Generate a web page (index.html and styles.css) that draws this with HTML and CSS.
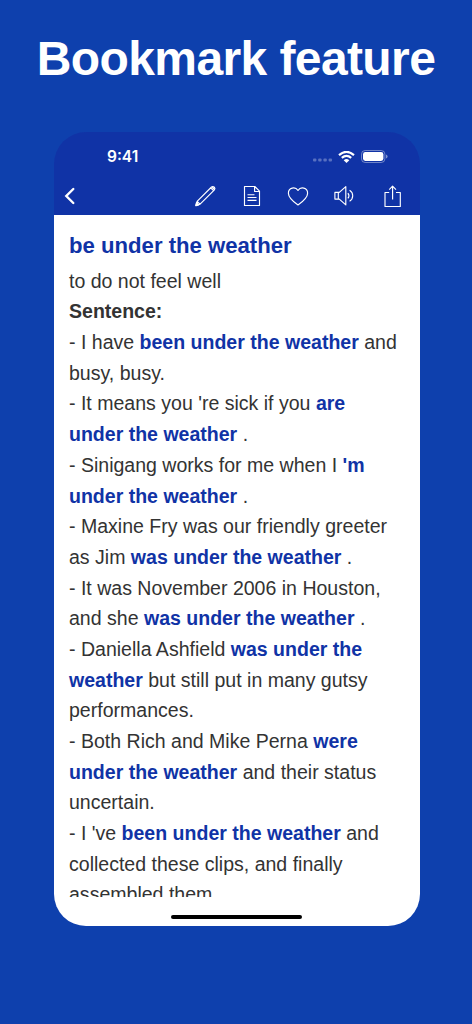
FILE: index.html
```html
<!DOCTYPE html>
<html lang="en">
<head>
    <meta charset="UTF-8">
    <meta name="viewport" content="width=device-width, initial-scale=1.0">
    <title>Bookmark feature</title>
    <link rel="stylesheet" href="styles.css">
</head>
<body>
    <h1 class="title">Bookmark feature</h1>
    <div class="phone">
        <header>
            <div class="status-bar">
                <span class="time">9:41</span>
                <div class="status-icons">
                    <svg class="dots" width="20" height="4" viewBox="0 0 20 4">
                        <rect x="0" y="0.5" width="3.4" height="3" rx="1"/>
                        <rect x="5.2" y="0.5" width="3.4" height="3" rx="1"/>
                        <rect x="10.4" y="0.5" width="3.4" height="3" rx="1"/>
                        <rect x="15.6" y="0.5" width="3.4" height="3" rx="1"/>
                    </svg>
                    <svg class="wifi" width="17" height="12" viewBox="0 0 17 12">
                        <path d="M1 4.1 Q8.5 -2.3 16 4.1 M3.8 6.9 Q8.5 2.9 13.2 6.9" fill="none" stroke="#fff" stroke-width="2.2"/>
                        <path d="M5.7 9.2 Q8.5 6.9 11.3 9.2 L8.5 12 Z" fill="#fff"/>
                    </svg>
                    <svg class="battery" width="27" height="13" viewBox="0 0 27 13">
                        <rect x="0.5" y="0.5" width="23.4" height="12" rx="3.7" fill="none" stroke="#fff" stroke-opacity="0.4"/>
                        <rect x="2" y="2" width="20.4" height="9" rx="2.4" fill="#fff"/>
                        <path d="M25 4.5 Q26.6 5 26.6 6.5 Q26.6 8 25 8.5 Z" fill="#fff" fill-opacity="0.45"/>
                    </svg>
                </div>
            </div>
            <div class="toolbar">
                <svg class="back" width="12" height="18" viewBox="0 0 12 18">
                    <path d="M9.3 2 L2.3 9 L9.3 16" stroke-width="2.4" stroke-linecap="round"/>
                </svg>
                <div class="actions">
                    <!-- edit -->
                    <svg width="24" height="24" viewBox="0 0 24 24">
                        <path d="M3 21.5 L4.1 17.3 L18.5 3 Q19.9 1.9 21.3 3.1 Q22.5 4.5 21.4 5.9 L7.1 20.2 Z M4.1 17.3 L7.1 20.2 M17.7 3.9 L20.5 6.7"/>
                        <path d="M3 21.5 L3.7 18.8 L5.6 20.7 Z M19.2 3.1 L21.3 5.2" stroke-width="1.6" fill="#fff"/>
                    </svg>
                    <!-- note -->
                    <svg width="24" height="24" viewBox="0 0 24 24">
                        <path d="M4.5 2.5 H14.8 L19.5 7.2 V21.5 H4.5 Z M14.6 2.6 V7.5 H19.4 M7.5 10.7 H14.5 M7.5 13.5 H16.5 M7.5 16.3 H16.5"/>
                    </svg>
                    <!-- bookmark -->
                    <svg width="24" height="24" viewBox="0 0 24 24">
                        <path d="M12 21 C8.5 18.4 2.4 14.2 2.4 9.2 C2.4 3.6 9.3 2.2 12 6.5 C14.7 2.2 21.6 3.6 21.6 9.2 C21.6 14.2 15.5 18.4 12 21 Z"/>
                    </svg>
                    <!-- listen -->
                    <svg width="24" height="24" viewBox="0 0 24 24">
                        <path d="M1.9 8.4 H6.3 L12.8 2.6 V20.9 L6.3 15.1 H1.9 Z M5.3 8.4 V15.1 M14.9 9.2 Q17 11.8 14.9 14.4 M16.6 6.3 Q19.7 8.2 19.7 11.8 Q19.7 15.4 16.6 17.3"/>
                    </svg>
                    <!-- share -->
                    <svg width="24" height="24" viewBox="0 0 24 24">
                        <path d="M9.2 8.5 H5 V22.5 H20.3 V8.5 H16 M12.6 15.5 V2.5 M9.2 5.6 L12.6 2.2 L16 5.6"/>
                    </svg>
                </div>
            </div>
        </header>
        <div class="content">
            <h2>be under the weather</h2>
            <p>to do not feel well</p>
            <p><strong>Sentence:</strong></p>
            <p>- I have <b>been under the weather</b> and<br>busy, busy.</p>
            <p>- It means you 're sick if you <b>are<br>under the weather</b> .</p>
            <p>- Sinigang works for me when I <b>'m<br>under the weather</b> .</p>
            <p>- Maxine Fry was our friendly greeter<br>as Jim <b>was under the weather</b> .</p>
            <p>- It was November 2006 in Houston,<br>and she <b>was under the weather</b> .</p>
            <p>- Daniella Ashfield <b>was under the<br>weather</b> but still put in many gutsy<br>performances.</p>
            <p>- Both Rich and Mike Perna <b>were<br>under the weather</b> and their status<br>uncertain.</p>
            <p>- I 've <b>been under the weather</b> and<br>collected these clips, and finally<br>assembled them</p>
        </div>
        <div class="home-bar"></div>
    </div>
</body>
</html>
```

FILE: styles.css
```css
* { box-sizing: border-box; }

body {
    background-color: #0e40ad;
    margin: 0;
    height: 1024px;
    overflow: hidden;
    font-family: "Liberation Sans", Arial, sans-serif;
}

.title {
    margin: 0;
    padding-top: 30px;
    height: 132px;
    color: white;
    font-size: 48px;
    line-height: 58px;
    letter-spacing: -0.6px;
    text-align: center;
    white-space: nowrap;
}

.phone {
    width: 366px;
    height: 794px;
    margin-left: 54px;
    border-radius: 32px;
    background: linear-gradient(#1033a6 83px, white 83px);
    overflow: hidden;
    display: flex;
    flex-direction: column;
    align-items: center;
}

header {
    width: 100%;
    height: 83px;
    flex: none;
}

/* Status bar */
.status-bar {
    display: flex;
    justify-content: space-between;
    align-items: center;
    height: 49px;
    padding: 0 32px 0 53px;
}
.time {
    color: white;
    font-family: Inter, sans-serif;
    font-size: 15.5px;
    font-weight: 600;
}
.status-icons {
    display: flex;
    align-items: center;
}
.dots {
    fill: rgba(255, 255, 255, 0.3);
    margin: 7px 5px 0 0;
}
.wifi {
    margin-right: 6px;
}

/* Toolbar */
.toolbar {
    display: flex;
    justify-content: space-between;
    align-items: center;
    height: 30px;
    padding: 0 16.5px 0 10px;
}
.toolbar svg {
    display: block;
    fill: none;
    stroke: white;
}
.actions {
    display: flex;
    gap: 22.6px;
}
.actions svg {
    stroke-width: 1.15;
    stroke-linejoin: round;
}

.content {
    width: 100%;
    height: 682px;
    padding: 16px 0 0 15px;
    overflow: hidden;
    color: #333;
    font-size: 19.55px;
    line-height: 30.69px;
    white-space: nowrap;
}
.content h2 {
    margin: 0 0 4px;
    font-size: 22.15px;
    color: #1033a6;
}
.content p {
    margin: 0;
}
.content b {
    color: #1033a6;
}

.home-bar {
    width: 131px;
    height: 4px;
    margin: 18px 1px 0 0;
    border-radius: 2px;
    background-color: black;
}
```
